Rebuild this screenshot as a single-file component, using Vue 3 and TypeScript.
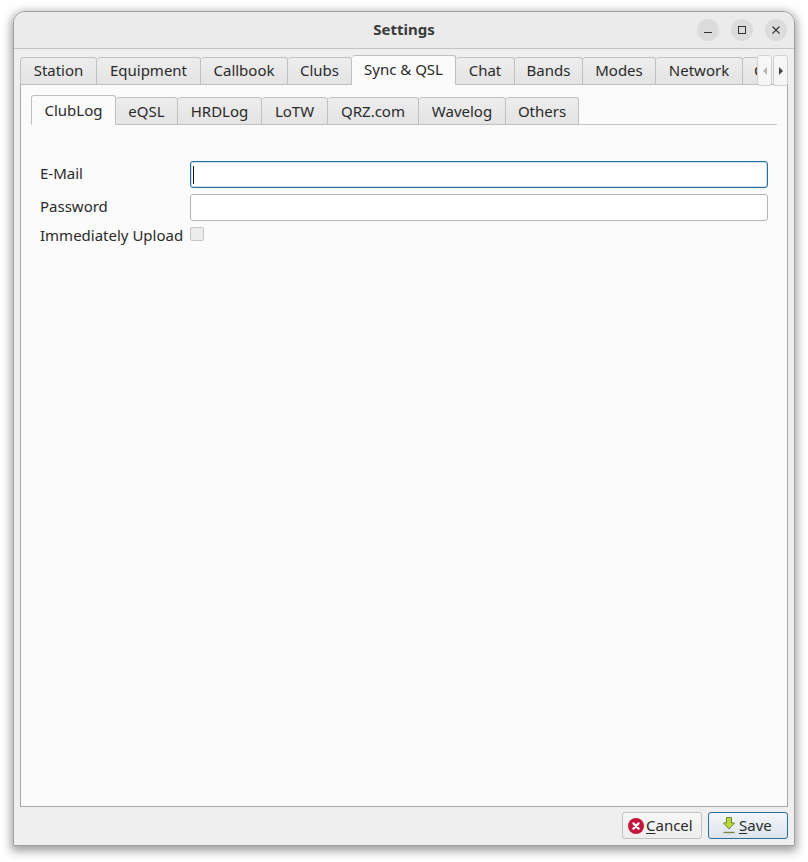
<script setup lang="ts">
interface TabItem { label: string; width: number; active?: boolean }
const outerTabs: TabItem[] = [
  { label: 'Station', width: 77 },
  { label: 'Equipment', width: 104 },
  { label: 'Callbook', width: 87 },
  { label: 'Clubs', width: 64 },
  { label: 'Sync & QSL', width: 104, active: true },
  { label: 'Chat', width: 59 },
  { label: 'Bands', width: 68 },
  { label: 'Modes', width: 73 },
  { label: 'Network', width: 87 },
  { label: 'GUI', width: 50 },
]
const innerTabs: TabItem[] = [
  { label: 'ClubLog', width: 85, active: true },
  { label: 'eQSL', width: 62 },
  { label: 'HRDLog', width: 84 },
  { label: 'LoTW', width: 66 },
  { label: 'QRZ.com', width: 91 },
  { label: 'Wavelog', width: 87 },
  { label: 'Others', width: 73 },
]
</script>

<template>
  <div class="page">
    <div class="window">
      <header class="titlebar">
        <span class="title">Settings</span>
        <div class="controls">
          <span class="ctl">
            <svg width="12" height="12" viewBox="0 0 12 12"><path d="M2 8.500h8" stroke="#333" stroke-width="1" fill="none" /></svg>
          </span>
          <span class="ctl">
            <svg width="12" height="12" viewBox="0 0 12 12"><rect x="2.500" y="2.500" width="7" height="7" stroke="#333" stroke-width="1" fill="none" /></svg>
          </span>
          <span class="ctl">
            <svg width="12" height="12" viewBox="0 0 12 12"><path d="M2.500 2.500l7 7M9.500 2.500l-7 7" stroke="#333" stroke-width="1.100" fill="none" /></svg>
          </span>
        </div>
      </header>

      <main class="content">
        <div class="outer-bar">
          <div class="tabstrip outer-strip">
            <div
              v-for="t in outerTabs"
              :key="t.label"
              class="tab"
              :class="{ active: t.active }"
              :style="{ width: t.width + 'px' }"
            >{{ t.label }}</div>
          </div>
          <div class="scrollers">
            <span class="scroll-btn">
              <svg width="6" height="10" viewBox="0 0 6 10"><path d="M5 1v8L1 5z" fill="#b5b5b5" /></svg>
            </span>
            <span class="scroll-btn">
              <svg width="6" height="10" viewBox="0 0 6 10"><path d="M1 1v8l4-4z" fill="#444" /></svg>
            </span>
          </div>
        </div>

        <section class="pane">
          <div class="tabstrip inner-strip">
            <div
              v-for="t in innerTabs"
              :key="t.label"
              class="tab"
              :class="{ active: t.active }"
              :style="{ width: t.width + 'px' }"
            >{{ t.label }}</div>
          </div>
          <form class="form">
            <label class="label">E-Mail</label>
            <div class="input focused"><span class="caret"></span></div>
            <label class="label">Password</label>
            <div class="input"></div>
            <label class="label label-check">Immediately Upload</label>
            <div class="checkbox"></div>
          </form>
        </section>

        <footer class="footer">
          <button class="btn cancel" type="button">
            <svg width="16" height="16" viewBox="0 0 16 16">
              <circle cx="8" cy="8" r="8" fill="#c4163a" />
              <path d="M5.400 5.400l5.200 5.200M10.600 5.400l-5.200 5.200" stroke="#fff" stroke-width="2.200" stroke-linecap="round" fill="none" />
            </svg>
            <span class="btn-text"><u>C</u>ancel</span>
          </button>
          <button class="btn primary" type="button">
            <svg width="12" height="17" viewBox="0 0 12 17">
              <path d="M3.500 0.500h5v5.500h3L6 12 0.500 6h3z" fill="#bcd83f" stroke="#70892e" stroke-width="1" />
              <path d="M0.500 15.500h11" stroke="#76883f" stroke-width="1.400" fill="none" />
            </svg>
            <span class="btn-text"><u>S</u>ave</span>
          </button>
        </footer>
      </main>
    </div>
  </div>
</template>

<style>
html, body { margin: 0; background: #fff; }
</style>

<style scoped>
.page {
  width: 808px;
  height: 862px;
  box-sizing: border-box;
  padding: 11px 13px 16px;
  overflow: hidden;
  font-family: "Noto Sans", sans-serif;
  font-size: 15px;
  color: #2a2a2a;
}
.window {
  width: 782px;
  height: 835px;
  box-sizing: border-box;
  border: 1px solid #a0a0a0;
  border-radius: 12px 12px 0 0;
  background: #efefef;
  box-shadow: 0 3px 10px 2px rgba(0, 0, 0, 0.38);
  display: flex;
  flex-direction: column;
  overflow: hidden;
}
.titlebar {
  position: relative;
  height: 37px;
  box-sizing: border-box;
  flex: none;
  background: #ebebeb;
  border-bottom: 1px solid #c4c4c4;
  display: flex;
  align-items: center;
  justify-content: center;
  padding-bottom: 2px;
}
.title { font-weight: 700; color: #3a3a3a; }
.controls {
  position: absolute;
  right: 7px;
  top: 7px;
  display: flex;
  gap: 12px;
}
.ctl {
  width: 22px;
  height: 22px;
  border-radius: 50%;
  background: #dcdcdc;
  display: flex;
  align-items: center;
  justify-content: center;
}
.content {
  flex: 1;
  display: flex;
  flex-direction: column;
  padding: 6px 6px 0;
  min-height: 0;
}
.outer-bar {
  position: relative;
  height: 30px;
  flex: none;
  margin-bottom: -1px;
  z-index: 1;
}
.tabstrip { display: flex; align-items: flex-end; overflow: hidden; }
.outer-strip { height: 30px; width: 737px; }
.tab {
  box-sizing: border-box;
  flex: none;
  height: 28px;
  border: 1px solid #c0c0c0;
  border-left-width: 0;
  border-radius: 3px 3px 0 0;
  background: linear-gradient(#ededed, #e4e4e4);
  display: flex;
  align-items: center;
  justify-content: center;
  white-space: nowrap;
  padding-bottom: 1px;
}
.outer-strip .tab { padding-bottom: 3px; }
.tab:first-child { border-left-width: 1px; }
.tab.active {
  height: 30px;
  background: #fbfbfb;
  border-bottom-color: #fbfbfb;
}
.outer-strip .tab.active { padding-bottom: 2px; }
.inner-strip .tab.active { padding-bottom: 1px; }
.scrollers {
  position: absolute;
  left: 737px;
  top: 0;
  display: flex;
  gap: 1px;
}
.scroll-btn {
  box-sizing: border-box;
  width: 15px;
  height: 31px;
  border: 1px solid #d2d2d2;
  border-radius: 3px;
  background: #f6f6f6;
  display: flex;
  align-items: center;
  justify-content: center;
}
.pane {
  flex: 1;
  min-height: 0;
  box-sizing: border-box;
  background: #fbfbfb;
  border: 1px solid #a8a8a8;
  padding: 10px 10px 0;
}
.inner-strip {
  height: 30px;
  border-bottom: 1px solid #c4c4c4;
  box-sizing: border-box;
  overflow: visible;
}
.inner-strip .tab { margin-bottom: -1px; }
.form {
  display: grid;
  grid-template-columns: 150px 578px;
  grid-template-rows: 27px 27px 22px;
  row-gap: 6px;
  align-items: center;
  padding: 36px 0 0 9px;
}
.label { line-height: 20px; padding-bottom: 3px; }
.input {
  box-sizing: border-box;
  height: 27px;
  background: #fff;
  border: 1px solid #b4b4b4;
  border-radius: 3px;
  display: flex;
  align-items: center;
}
.input.focused { border-color: #2a6f9e; box-shadow: inset 0 0 0 1px #cfe0ec; }
.caret { width: 1px; height: 18px; background: #111; margin-left: 2px; }
.checkbox {
  box-sizing: border-box;
  width: 14px;
  height: 14px;
  border: 1px solid #c6c6c6;
  border-radius: 2px;
  background: #ececec;
  align-self: start;
}
.label-check { align-self: start; margin-top: -2px; }
.footer {
  flex: none;
  height: 38px;
  box-sizing: border-box;
  display: flex;
  justify-content: flex-end;
  gap: 6px;
  padding-top: 5px;
}
.btn {
  box-sizing: border-box;
  width: 80px;
  height: 27px;
  padding: 0;
  border: 1px solid #c2c2c2;
  border-radius: 3px;
  background: linear-gradient(#f7f7f7, #ededed);
  font: inherit;
  color: inherit;
  display: flex;
  align-items: center;
  justify-content: flex-start;
  gap: 2px;
}
.btn-text { margin-top: -2px; }
.btn.cancel { padding-left: 5px; }
.btn.primary {
  border-color: #2a6f9e;
  background: linear-gradient(#f3f6f9, #dde4ec);
  padding-left: 14px;
  gap: 4px;
}
u { text-underline-offset: 2px; }
</style>
